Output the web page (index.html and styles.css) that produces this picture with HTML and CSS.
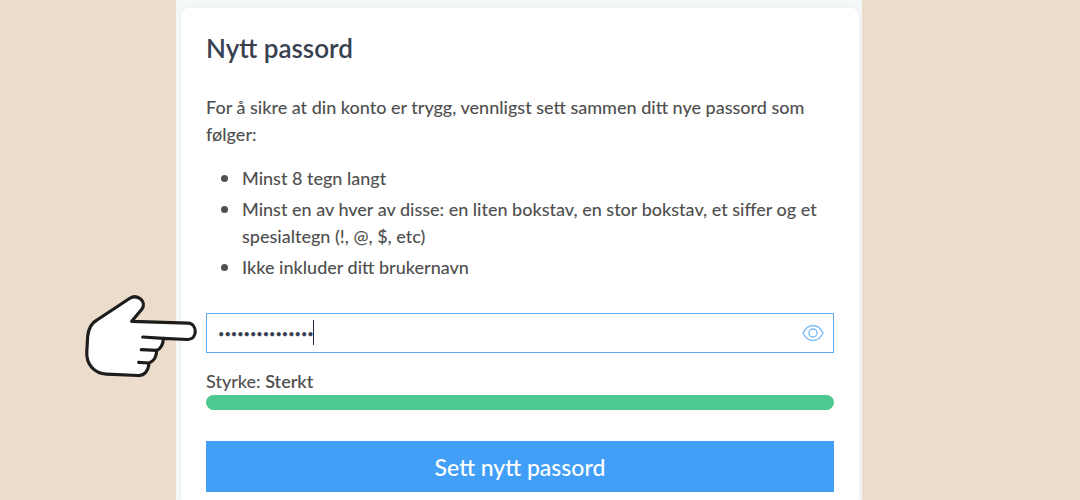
FILE: index.html
```html
<!DOCTYPE html>
<html lang="nb">
<head>
  <meta charset="UTF-8">
  <meta name="viewport" content="width=device-width, initial-scale=1.0">
  <title>Nytt passord</title>
  <link rel="stylesheet" href="styles.css">
</head>
<body>

  <main class="panel">
    <form class="card">
      <h1>Nytt passord</h1>

      <p class="intro">For å sikre at din konto er trygg, vennligst sett sammen ditt nye passord som følger:</p>

      <ul class="rules">
        <li>Minst 8 tegn langt</li>
        <li>Minst en av hver av disse: en liten bokstav, en stor bokstav, et siffer og et spesialtegn (!, @, $, etc)</li>
        <li>Ikke inkluder ditt brukernavn</li>
      </ul>

      <!-- Password field -->
      <div class="field">
        <input type="password" id="password" aria-label="Nytt passord" value="Passord!1234567">
        <span class="caret"></span>
        <button type="button" class="show-btn" aria-label="Vis passord">
          <svg width="22" height="18" viewBox="0 0 22 18" fill="none" stroke="currentColor" stroke-width="1.400">
            <path d="M1 9C3 5 6.500 1.500 11 1.500S19 5 21 9C19 13 15.500 16.500 11 16.500S3 13 1 9Z"/>
            <circle cx="11" cy="9" r="4"/>
          </svg>
        </button>

        <!-- Pointing hand -->
        <svg class="hand" width="120" height="90" viewBox="80 290 120 90" fill="#fff" stroke="#1d1d1b" stroke-width="3.200" stroke-linecap="round" stroke-linejoin="round">
          <path d="M131.700 321.300L188 323.200C198 324 197.500 339.700 187.500 339.500L163.300 338.300C163.500 344 160.500 349 156.800 350.300C156.500 357 153.500 361.500 149 363C148.500 370.500 144.500 376 138 375.500L106.500 374.200C94 373.500 86 364 86.800 351.700L87.700 336C88.500 329 91.500 323 97 320L129.500 298.500C137.500 293.500 147 301.500 142 309Z"/>
          <path d="M142.700 337L163.300 338.300M141.300 349.700L156.800 350.300M138.700 362.300L149 363" fill="none"/>
        </svg>
      </div>

      <label class="strength" for="password">Styrke: <b>Sterkt</b></label>
      <div class="bar"></div>

      <button type="submit" class="submit-btn">Sett nytt passord</button>
    </form>
  </main>

</body>
</html>
```
FILE: styles.css
```css
* {
  box-sizing: border-box;
}

body {
  margin: 0;
  padding: 0 218px 0 176px;
  background: #ecdccc;
  color: #505050;
  font-family: Lato, sans-serif;
  font-size: 18px;
  font-weight: 500;
  line-height: 27px;
}

.panel {
  padding: 8px 3px 0 5px;
  background: #f5f8f8;
}

.card {
  padding: 24px 25px 8px;
  background: #fff;
  border-radius: 8px 8px 0 0;
  box-shadow: 0 0 5px rgba(0, 0, 0, 0.05);
}

h1 {
  margin: 0 0 30px;
  color: #374151;
  font-size: 26px;
  font-weight: 600;
  line-height: 32px;
}

.intro {
  margin: 0 0 15px;
}

.rules {
  display: grid;
  gap: 2px;
  margin: 0 0 32px;
  padding-left: 36px;
}

.rules li::marker {
  font-size: 22px;
}

.field {
  position: relative;
  display: flex;
  align-items: center;
  height: 40px;
  margin-bottom: 15px;
  border: 1px solid #5eabf2;
}

.field input {
  flex: 1;
  min-width: 0;
  padding: 0 11px;
  border: 0;
  outline: 0;
  background: none;
  color: #374151;
  font: 11px Lato, sans-serif;
}

.caret {
  position: absolute;
  top: 6px;
  left: 106px;
  width: 1px;
  height: 25px;
  background: #1f2937;
}

.show-btn {
  display: flex;
  padding: 0 9px;
  border: 0;
  background: none;
  color: #7dbcf5;
  cursor: pointer;
}

.hand {
  position: absolute;
  top: -24px;
  left: -127px;
}

.strength {
  display: block;
}

.strength b {
  font-weight: 600;
}

.bar {
  height: 15px;
  margin-bottom: 31px;
  background: #4bc990;
  border-radius: 8px;
}

.submit-btn {
  display: block;
  width: 100%;
  height: 51px;
  border: 0;
  background: #429ff7;
  color: #fff;
  font: 500 23px Lato, sans-serif;
  cursor: pointer;
}
```
